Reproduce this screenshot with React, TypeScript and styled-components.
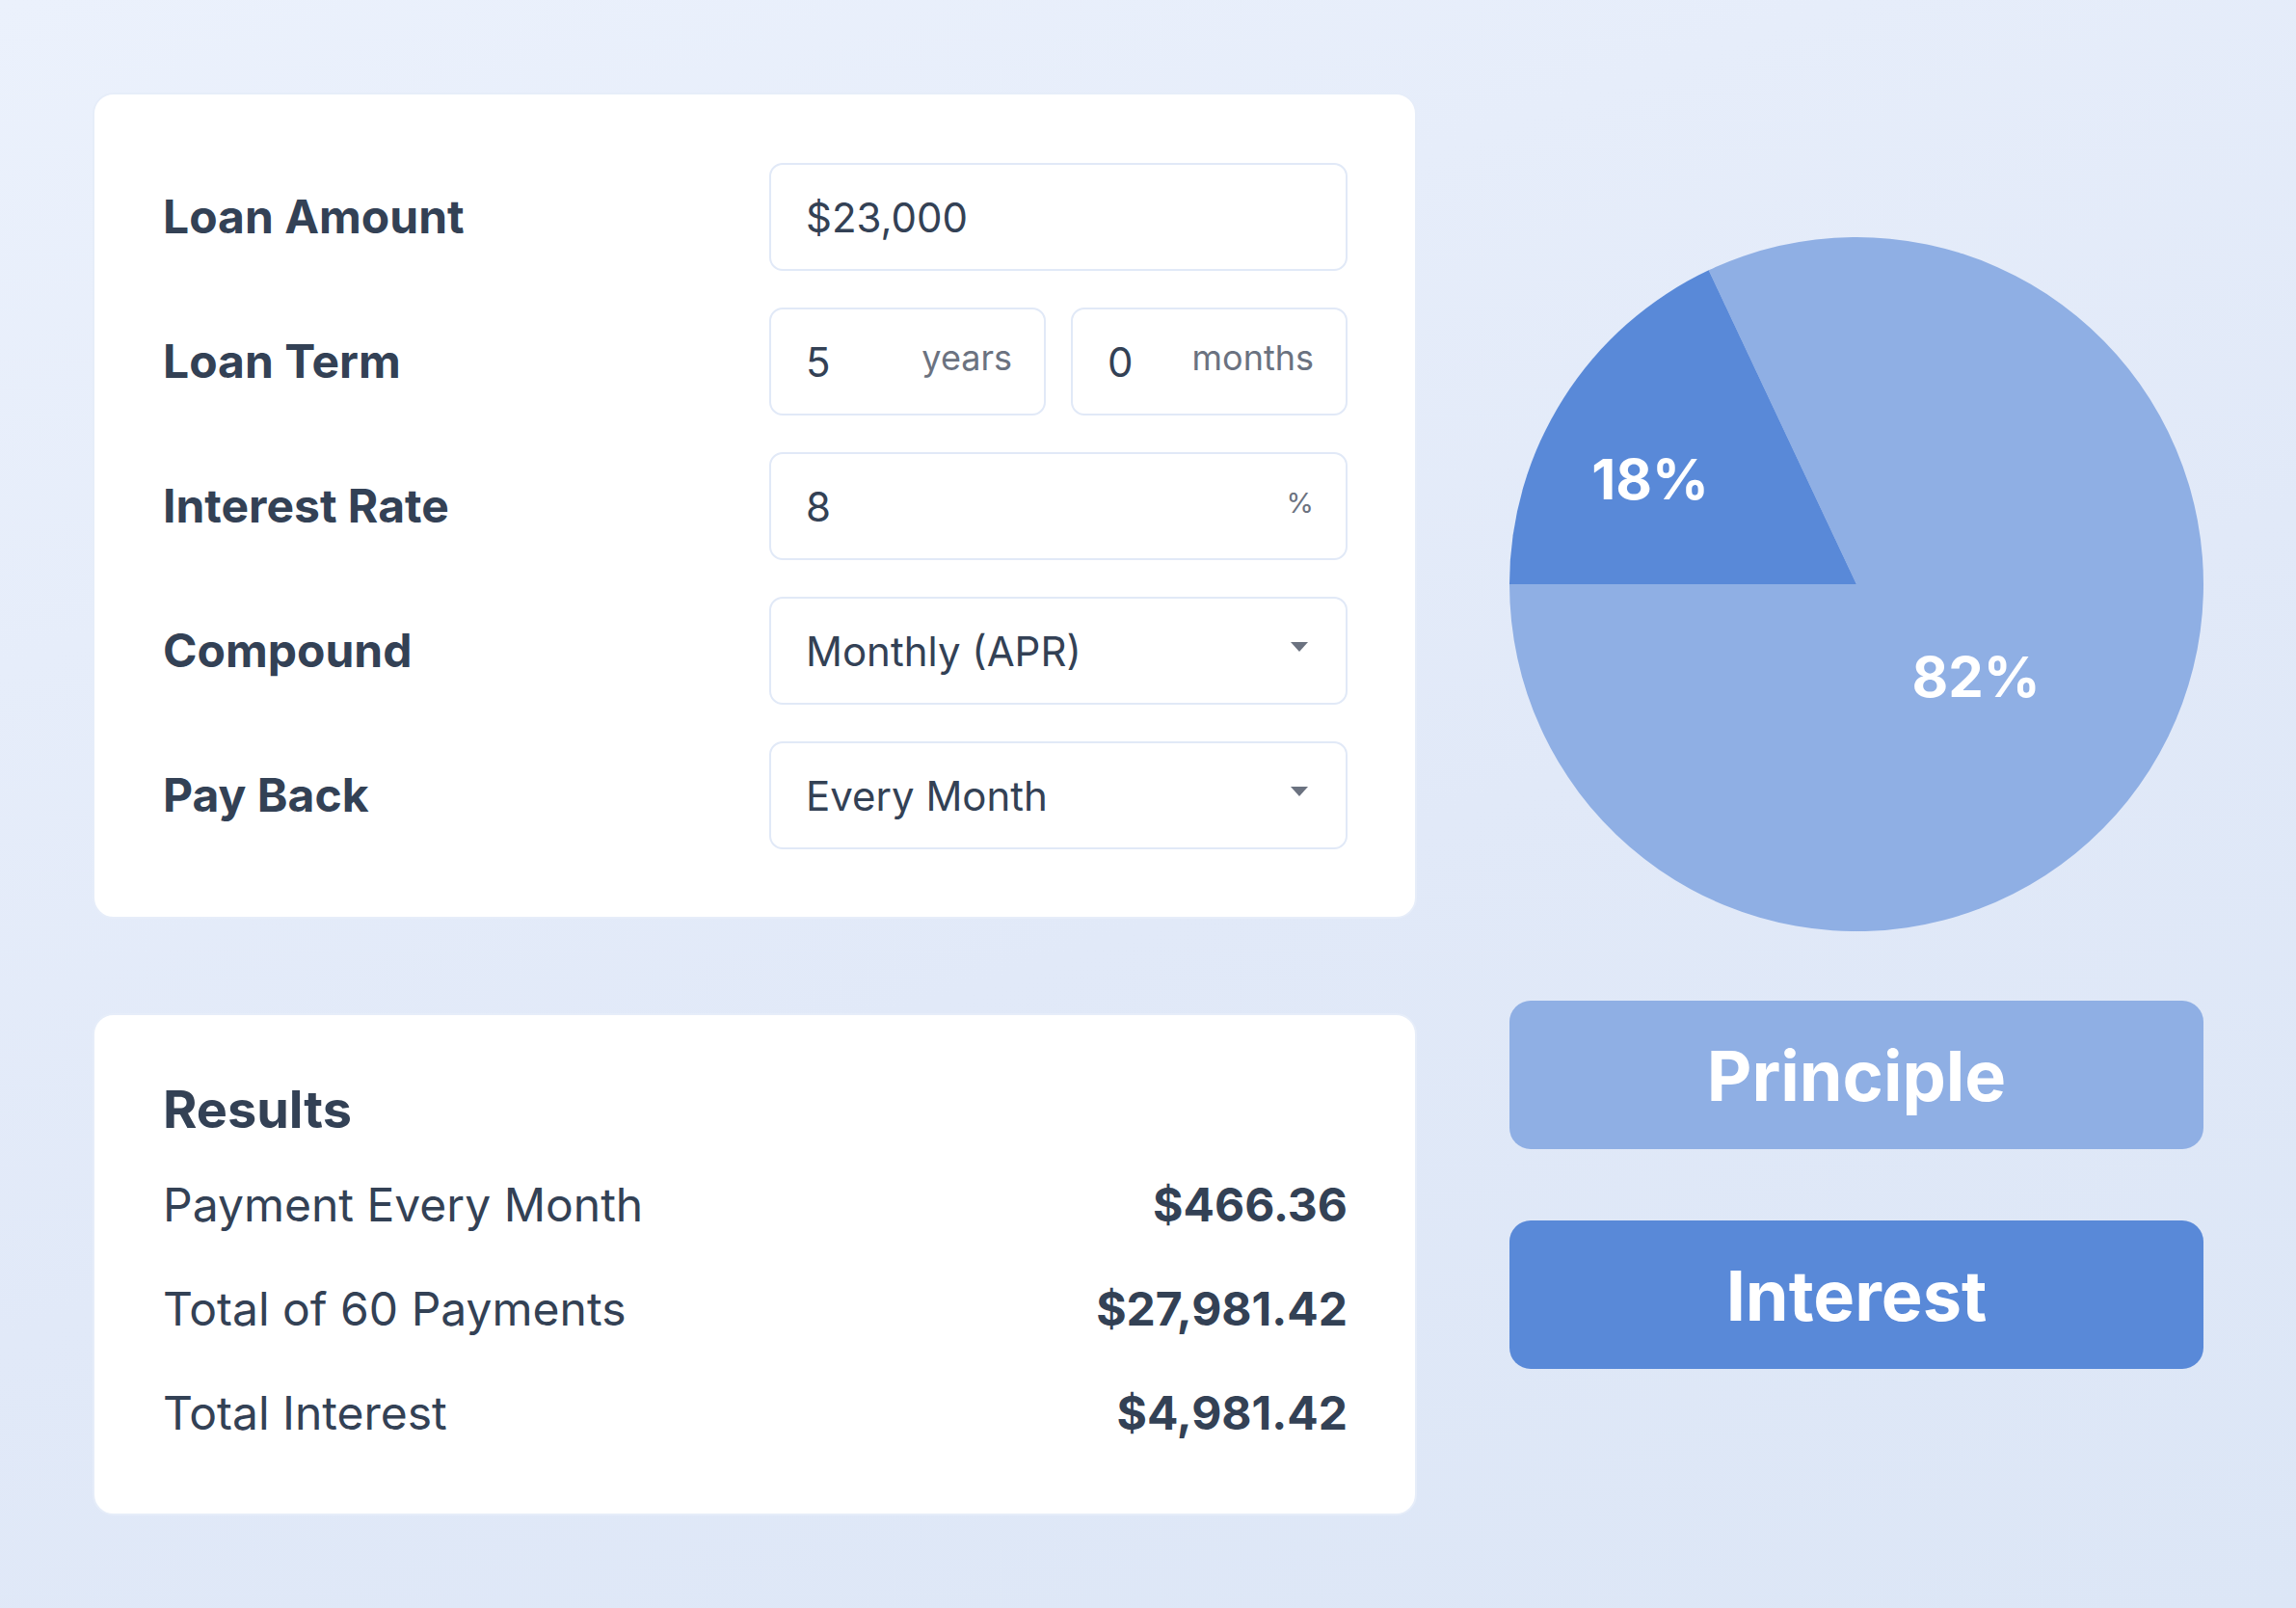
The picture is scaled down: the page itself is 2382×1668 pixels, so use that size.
import React from "react";
import styled, { createGlobalStyle } from "styled-components";

const GlobalStyle = createGlobalStyle`
  html, body { margin: 0; padding: 0; }
  body {
    font-family: Inter, "Noto Sans", "Liberation Sans", sans-serif;
    color: #334155;
  }
  * { box-sizing: border-box; }
`;

const Page = styled.div`
  width: 2382px;
  height: 1668px;
  background: linear-gradient(160deg, #ebf1fc 0%, #e1e9f8 55%, #dce6f6 100%);
  padding: 96px 96px 97px 96px;
  display: grid;
  grid-template-columns: 1374px 720px;
  column-gap: 96px;
  align-items: start;
`;

const LeftColumn = styled.div`
  display: flex;
  flex-direction: column;
  gap: 98px;
`;

const Card = styled.section<{ $pad: string }>`
  background: #ffffff;
  border: 2px solid #e6edf9;
  border-radius: 22px;
  padding: ${(p) => p.$pad};
`;

const FormGrid = styled.div`
  display: grid;
  grid-template-columns: 1fr 600px;
  row-gap: 38px;
  align-items: center;
`;

const Label = styled.div`
  font-size: 48px;
  font-weight: 700;
  color: #334155;
  line-height: 1;
`;

const Field = styled.div`
  height: 112px;
  border: 2px solid #e1e9f7;
  border-radius: 14px;
  background: #fff;
  display: flex;
  align-items: center;
  justify-content: space-between;
  padding: 0 33px 0 36px;
  font-size: 42px;
  color: #334155;
`;

const SplitFields = styled.div`
  display: grid;
  grid-template-columns: 1fr 1fr;
  gap: 26px;
`;

const Unit = styled.span<{ $size?: number }>`
  font-size: ${(p) => p.$size ?? 36}px;
  color: #6b7280;
  transform: translateY(-4px);
`;

const Caret = styled.span`
  width: 0;
  height: 0;
  border-left: 9px solid transparent;
  border-right: 9px solid transparent;
  border-top: 10px solid #6b7280;
  transform: translateY(-4px);
  margin-right: 6px;
`;

const ResultsTitle = styled.h2`
  margin: 0 0 40px;
  font-size: 54px;
  font-weight: 700;
  line-height: 56px;
  color: #334155;
`;

const ResultList = styled.div`
  display: flex;
  flex-direction: column;
  gap: 48px;
`;

const ResultRow = styled.div`
  display: flex;
  justify-content: space-between;
  align-items: center;
  height: 60px;
  font-size: 48px;
`;

const ResultName = styled.span`
  font-weight: 400;
  color: #334155;
`;

const ResultValue = styled.span`
  font-weight: 700;
  color: #334155;
  font-size: 48px;
`;

const RightColumn = styled.div`
  display: flex;
  flex-direction: column;
  padding-top: 150px;
`;

const PieWrap = styled.div`
  width: 720px;
  height: 720px;
  margin-bottom: 72px;
`;

const LegendButton = styled.button<{ $bg: string }>`
  height: 154px;
  width: 100%;
  border: none;
  border-radius: 22px;
  background: ${(p) => p.$bg};
  color: #fff;
  font-family: Inter, "Noto Sans", "Liberation Sans", sans-serif;
  font-weight: 700;
  font-size: 72px;
  display: flex;
  align-items: center;
  justify-content: center;
  padding: 0;
  & + & {
    margin-top: 74px;
  }
`;

const LIGHT = "#8fafe4";
const DARK = "#5989d8";

export default function App() {
  const fields = (
    <FormGrid>
      <Label>Loan Amount</Label>
      <Field>$23,000</Field>

      <Label>Loan Term</Label>
      <SplitFields>
        <Field>
          5<Unit>years</Unit>
        </Field>
        <Field>
          0<Unit>months</Unit>
        </Field>
      </SplitFields>

      <Label>Interest Rate</Label>
      <Field>
        8<Unit $size={29}>%</Unit>
      </Field>

      <Label>Compound</Label>
      <Field>
        Monthly (APR)
        <Caret />
      </Field>

      <Label>Pay Back</Label>
      <Field>
        Every Month
        <Caret />
      </Field>
    </FormGrid>
  );

  return (
    <>
      <GlobalStyle />
      <Page>
        <LeftColumn>
          <Card $pad="71px 70px 70px 71px">{fields}</Card>
          <Card $pad="70px 70px 75px 71px">
            <ResultsTitle>Results</ResultsTitle>
            <ResultList>
              <ResultRow>
                <ResultName>Payment Every Month</ResultName>
                <ResultValue>$466.36</ResultValue>
              </ResultRow>
              <ResultRow>
                <ResultName>Total of 60 Payments</ResultName>
                <ResultValue>$27,981.42</ResultValue>
              </ResultRow>
              <ResultRow>
                <ResultName>Total Interest</ResultName>
                <ResultValue>$4,981.42</ResultValue>
              </ResultRow>
            </ResultList>
          </Card>
        </LeftColumn>

        <RightColumn>
          <PieWrap>
            <svg width="720" height="720" viewBox="0 0 720 720">
              <path d="M360,360 L206.7,34.3 A360,360 0 1 1 0,360 Z" fill={LIGHT} />
              <path d="M360,360 L0,360 A360,360 0 0 1 206.7,34.3 Z" fill={DARK} />
              <text
                x="146"
                y="251"
                textAnchor="middle"
                dominantBaseline="central"
                fill="#fff"
                fontFamily="Inter, 'Liberation Sans', sans-serif"
                fontWeight="700"
                fontSize="58"
              >
                18%
              </text>
              <text
                x="484"
                y="456"
                textAnchor="middle"
                dominantBaseline="central"
                fill="#fff"
                fontFamily="Inter, 'Liberation Sans', sans-serif"
                fontWeight="700"
                fontSize="58"
              >
                82%
              </text>
            </svg>
          </PieWrap>
          <LegendButton $bg={LIGHT}>Principle</LegendButton>
          <LegendButton $bg={DARK}>Interest</LegendButton>
        </RightColumn>
      </Page>
    </>
  );
}
